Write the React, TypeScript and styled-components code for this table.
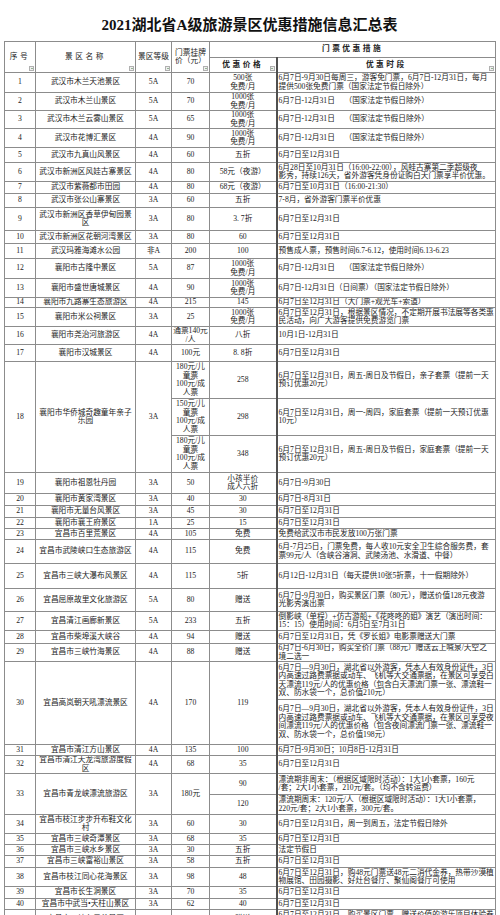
import React from "react";
import styled, { createGlobalStyle } from "styled-components";

const GlobalStyle = createGlobalStyle`
  html, body {
    margin: 0;
    padding: 0;
    background: #fff;
  }
  body {
    font-family: "Liberation Serif", "Noto Sans CJK SC", serif;
  }
`;

const Page = styled.div`
  width: 500px;
  height: 915px;
  overflow: hidden;
  box-sizing: border-box;
  padding: 0 5px 0 4px;
  background: #fff;
`;

const Title = styled.h1`
  margin: 0;
  height: 41px;
  box-sizing: border-box;
  padding-top: 5px;
  display: flex;
  align-items: center;
  justify-content: center;
  font-size: 15px;
  font-weight: bold;
  color: #111;
  letter-spacing: 0;
`;

const Table = styled.table`
  width: 491px;
  border-collapse: collapse;
  table-layout: fixed;
  font-size: 7.7px;
  line-height: 8.5px;
  color: #1c1c1c;
`;

const Col = styled.col<{ $w: number }>`
  width: ${(p) => p.$w}px;
`;

const Row = styled.tr<{ $h: number }>`
  height: ${(p) => p.$h}px;
`;

const HeadCell = styled.th<{ $bold?: boolean; $spaced?: boolean; $split?: boolean }>`
  position: relative;
  border: 1px solid #8c8c8c;
  ${(p) => (p.$split ? "border-left: 2px solid #505050;" : "")}
  padding: 0 1px;
  font-weight: ${(p) => (p.$bold ? "bold" : "normal")};
  letter-spacing: ${(p) => (p.$spaced ? "2.5px" : "0")};
  text-align: center;
  vertical-align: middle;
  white-space: pre;
  color: #222;
`;

const Cell = styled.td<{ $left?: boolean; $split?: boolean }>`
  border: 1px solid #8c8c8c;
  ${(p) => (p.$split ? "border-left: 2px solid #505050;" : "")}
  padding: 0 1px;
  text-align: ${(p) => (p.$left ? "left" : "center")};
  vertical-align: middle;
  white-space: pre;
  overflow: hidden;
`;

const Filter = styled.span`
  position: absolute;
  right: 1px;
  bottom: 1px;
  width: 5px;
  height: 5px;
  box-sizing: border-box;
  background: #efefef;
  border: 1px solid #b0b0b0;
  &::after {
    content: "";
    position: absolute;
    left: 0.5px;
    top: 1px;
    border-left: 1px solid transparent;
    border-right: 1px solid transparent;
    border-top: 1.5px solid #3a7a3a;
  }
`;

type Sub = { h: number; listed?: string; promo?: string; time: string };
type Spot = {
  no: string;
  name: string;
  level: string;
  listed?: string;
  promo?: string;
  subs: Sub[];
};

const gap = "\u3000 ";
const free1000 = "1000张\n免费/月";
const holiday = `6月7日-12月31日${gap}（国家法定节假日除外）`;
const allYear = "6月7日至12月31日";

const spots: Spot[] = [
  { no: "1", name: "武汉市木兰天池景区", level: "5A", listed: "70", promo: "500张\n免费/月", subs: [{ h: 20, time: "6月7日-9月30日每周三，游客免门票，6月7日-12月31日，每月\n提供500张免费门票（国家法定节假日除外）" }] },
  { no: "2", name: "武汉市木兰山景区", level: "5A", listed: "70", promo: free1000, subs: [{ h: 18, time: holiday }] },
  { no: "3", name: "武汉市木兰云雾山景区", level: "5A", listed: "65", promo: free1000, subs: [{ h: 18, time: holiday }] },
  { no: "4", name: "武汉市花博汇景区", level: "4A", listed: "90", promo: free1000, subs: [{ h: 19, time: holiday }] },
  { no: "5", name: "武汉市九真山风景区", level: "4A", listed: "60", promo: "五折", subs: [{ h: 15, time: allYear }] },
  { no: "6", name: "武汉市新洲区风娃古寨景区", level: "4A", listed: "80", promo: "58元（夜游）", subs: [{ h: 19, time: "6月28日至10月31日（16:00-22:00），风蛙古寨第二季超级夜\n影秀，持续126天，省外游客凭身份证购白天门票享半价优惠。" }] },
  { no: "7", name: "武汉市紫薇都市田园", level: "4A", listed: "80", promo: "68元（夜游）", subs: [{ h: 12, time: "6月7日至10月31日（16:00-21:30）" }] },
  { no: "8", name: "武汉市张公山寨景区", level: "3A", listed: "60", promo: "五折", subs: [{ h: 14, time: "7-8月，省外游客门票半价优惠" }] },
  { no: "9", name: "武汉市新洲区香草伊甸园景\n区", level: "3A", listed: "80", promo: "3. 7折", subs: [{ h: 23, time: allYear }] },
  { no: "10", name: "武汉市新洲区花朝河湾景区", level: "3A", listed: "80", promo: "60", subs: [{ h: 13, time: allYear }] },
  { no: "11", name: "武汉玛雅海滩水公园", level: "非A", listed: "200", promo: "100", subs: [{ h: 15, time: "预售成人票，预售时间6.7-6.12，使用时间6.13-6.23" }] },
  { no: "12", name: "襄阳市古隆中景区", level: "5A", listed: "87", promo: free1000, subs: [{ h: 20, time: holiday }] },
  { no: "13", name: "襄阳市盛世唐城景区", level: "4A", listed: "90", promo: free1000, subs: [{ h: 19, time: "6月7日-12月31日（日间票）（国家法定节假日除外）" }] },
  { no: "14", name: "襄阳市九路寨生态旅游区", level: "4A", listed: "215", promo: "145", subs: [{ h: 10, time: "6月7日至12月31日（大门票+观光车+索道）" }] },
  { no: "15", name: "襄阳市米公祠景区", level: "3A", listed: "25", promo: free1000, subs: [{ h: 19, time: "6月7日至12月31日，根据景区情况，不定期开展书法展等各类惠\n民活动，向广大游客提供免费游览门票" }] },
  { no: "16", name: "襄阳市尧治河旅游区", level: "4A", listed: "通票140元\n/人", promo: "八折", subs: [{ h: 17, time: "10月1日-12月31日" }] },
  { no: "17", name: "襄阳市汉城景区", level: "4A", listed: "100元", promo: "8. 8折", subs: [{ h: 17, time: allYear }] },
  {
    no: "18",
    name: "襄阳市华侨城奇趣童年亲子\n乐园",
    level: "3A",
    subs: [
      { h: 37, listed: "180元/儿\n童票\n100元/成\n人票", promo: "258", time: "6月7日至12月31日，周五-周日及节假日，亲子套票（提前一天\n预订优惠20元）" },
      { h: 37, listed: "150元/儿\n童票\n100元/成\n人票", promo: "298", time: "6月7日至12月31日，周一-周四，家庭套票（提前一天预订优惠\n10元）" },
      { h: 37, listed: "180元/儿\n童票\n100元/成\n人票", promo: "348", time: "6月7日至12月31日，周五-周日及节假日，家庭套票（提前一天\n预订优惠20元）" },
    ],
  },
  { no: "19", name: "襄阳市祖恩牡丹园", level: "3A", listed: "50", promo: "小孩半价\n成人六折", subs: [{ h: 21, time: "6月7日-9月30日" }] },
  { no: "20", name: "襄阳市黄家湾景区", level: "3A", listed: "40", promo: "30", subs: [{ h: 12, time: "6月7日-8月31日" }] },
  { no: "21", name: "襄阳市无量台风景区", level: "3A", listed: "45", promo: "30", subs: [{ h: 12, time: allYear }] },
  { no: "22", name: "襄阳市襄王府景区", level: "1A", listed: "25", promo: "15", subs: [{ h: 11, time: allYear }] },
  { no: "23", name: "宜昌市百里荒景区", level: "4A", listed: "105", promo: "免费", subs: [{ h: 11, time: "免费给武汉市市民发放100万张门票" }] },
  { no: "24", name: "宜昌市武陵峡口生态旅游区", level: "4A", listed: "115", promo: "免费", subs: [{ h: 24, time: "6月-7月25日，门票免费，每人收10元安全卫生综合服务费，套\n票99元/人（含峡谷溶洞、武陵汤池、水滑道、中餐）" }] },
  { no: "25", name: "宜昌市三峡大瀑布风景区", level: "4A", listed: "115", promo: "5折", subs: [{ h: 25, time: "6月12日-12月31日（每天提供10张5折票，十一假期除外）" }] },
  { no: "26", name: "宜昌屈原故里文化旅游区", level: "5A", listed: "80", promo: "赠送", subs: [{ h: 23, time: "6月7日-9月30日，购买景区门票（80元），赠送价值128元夜游\n光影秀演出票" }] },
  { no: "27", name: "宜昌清江画廊新景区", level: "5A", listed: "233", promo: "五折", subs: [{ h: 19, time: "倒影峡（单程）+仿古游船+《花咚咚的姐》演艺（演出时间：\n15：15）使用时间：6月5日至7月31日" }] },
  { no: "28", name: "宜昌市柴埠溪大峡谷", level: "4A", listed: "94", promo: "赠送", subs: [{ h: 13, time: "6月7日至12月31日，凭《罗长姐》电影票赠送大门票" }] },
  { no: "29", name: "宜昌市三峡竹海景区", level: "4A", listed: "88", promo: "赠送", subs: [{ h: 18, time: "6月7日-6月30日，购买全价门票（88元）赠送云上喊泉/天空之\n境二选一" }] },
  {
    no: "30",
    name: "宜昌高岚朝天吼漂流景区",
    level: "4A",
    listed: "170",
    promo: "119",
    subs: [
      { h: 38, time: "6月7日—9月30日，湖北省以外游客，凭本人有效身份证件，3日\n内高速过路费票据或动车、飞机等大交通票据，在景区可享受白\n天漂流119元/人的优惠价格（包含白天漂流门票一张、漂流鞋一\n双、防水袋一个，总价值210元）" },
      { h: 45, time: "6月7日—9月30日，湖北省以外游客，凭本人有效身份证件，3日\n内高速过路费票据或动车、飞机等大交通票据，在景区可享受夜\n间漂流119元/人的优惠价格（包含夜间漂流门票一张、漂流鞋一\n双、防水袋一个，总价值198元）" },
    ],
  },
  { no: "31", name: "宜昌市清江方山景区", level: "4A", listed: "135", promo: "100", subs: [{ h: 11, time: "6月7日-9月30日；10月8日-12月31日" }] },
  { no: "32", name: "宜昌市清江天龙湾旅游度假\n区", level: "4A", listed: "68", promo: "35", subs: [{ h: 18, time: allYear }] },
  {
    no: "33",
    name: "宜昌市青龙峡漂流旅游区",
    level: "3A",
    listed: "180元",
    subs: [
      { h: 21, promo: "90", time: "漂流期非周末：（根据区域限时活动）：1大1小套票，160元\n/套；2大1小套票，210元/套。（均不含转运费）" },
      { h: 20, promo: "120", time: "漂流期周末：120元/人（根据区域限时活动）：1大1小套票，\n220元/套；2大1小套票，300元/套。" },
    ],
  },
  { no: "34", name: "宜昌市枝江步步升布鞋文化\n村", level: "3A", listed: "60", promo: "30", subs: [{ h: 19, time: "6月7日至12月31日，周一到周五，法定节假日除外" }] },
  { no: "35", name: "宜昌市三峡奇潭景区", level: "3A", listed: "68", promo: "35", subs: [{ h: 11, time: allYear }] },
  { no: "36", name: "宜昌市三峡水乡景区", level: "3A", listed: "30", promo: "五折", subs: [{ h: 11, time: "法定节假日" }] },
  { no: "37", name: "宜昌市三峡富裕山景区", level: "3A", listed: "58", promo: "五折", subs: [{ h: 12, time: allYear }] },
  { no: "38", name: "宜昌市枝江同心花海景区", level: "3A", listed: "98", promo: "48", subs: [{ h: 19, time: "6月7日至12月31日，购48元门票送48元二消代金券，热带沙漠植\n物展馆、田园摄影、好灶台餐厅、聚仙阁餐厅可使用" }] },
  { no: "39", name: "宜昌市长生洞景区", level: "3A", listed: "70", promo: "35", subs: [{ h: 12, time: allYear }] },
  { no: "40", name: "宜昌市中武当•天柱山景区", level: "3A", listed: "62", promo: "40", subs: [{ h: 11, time: allYear }] },
  { no: "41", name: "宜昌市三峡九凤谷景区", level: "3A", listed: "80", promo: "赠送", subs: [{ h: 20, time: "6月7日至12月31日，购买景区门票，赠送价值的游乐项目体验券\n一张" }] },
];

function SpotRows({ spot }: { spot: Spot }) {
  const span = spot.subs.length;
  return (
    <>
      {spot.subs.map((sub, i) => (
        <Row $h={sub.h} key={i}>
          {i === 0 && (
            <>
              <Cell rowSpan={span}>{spot.no}</Cell>
              <Cell rowSpan={span}>{spot.name}</Cell>
              <Cell rowSpan={span}>{spot.level}</Cell>
            </>
          )}
          {spot.listed !== undefined ? (
            i === 0 && <Cell rowSpan={span}>{spot.listed}</Cell>
          ) : (
            <Cell>{sub.listed}</Cell>
          )}
          {spot.promo !== undefined ? (
            i === 0 && <Cell rowSpan={span}>{spot.promo}</Cell>
          ) : (
            <Cell>{sub.promo}</Cell>
          )}
          <Cell $left $split>
            {sub.time}
          </Cell>
        </Row>
      ))}
    </>
  );
}

export default function App() {
  return (
    <>
      <GlobalStyle />
      <Page>
        <Title>2021湖北省A级旅游景区优惠措施信息汇总表</Title>
        <Table>
          <colgroup>
            <Col $w={31} />
            <Col $w={100} />
            <Col $w={36} />
            <Col $w={38} />
            <Col $w={67} />
            <Col $w={219} />
          </colgroup>
          <thead>
            <Row $h={16}>
              <HeadCell rowSpan={2} $spaced>
                序号
                <Filter />
              </HeadCell>
              <HeadCell rowSpan={2} $spaced>
                景区名称
                <Filter />
              </HeadCell>
              <HeadCell rowSpan={2}>
                景区等级
                <Filter />
              </HeadCell>
              <HeadCell rowSpan={2}>
                {"门票挂牌\n价（元）"}
                <Filter />
              </HeadCell>
              <HeadCell colSpan={2} $bold $spaced>
                门票优惠措施
              </HeadCell>
            </Row>
            <Row $h={15}>
              <HeadCell $bold $spaced>
                优惠价格
                <Filter />
              </HeadCell>
              <HeadCell $bold $spaced $split>
                优惠时段
                <Filter />
              </HeadCell>
            </Row>
          </thead>
          <tbody>
            {spots.map((spot) => (
              <SpotRows spot={spot} key={spot.no} />
            ))}
          </tbody>
        </Table>
      </Page>
    </>
  );
}
